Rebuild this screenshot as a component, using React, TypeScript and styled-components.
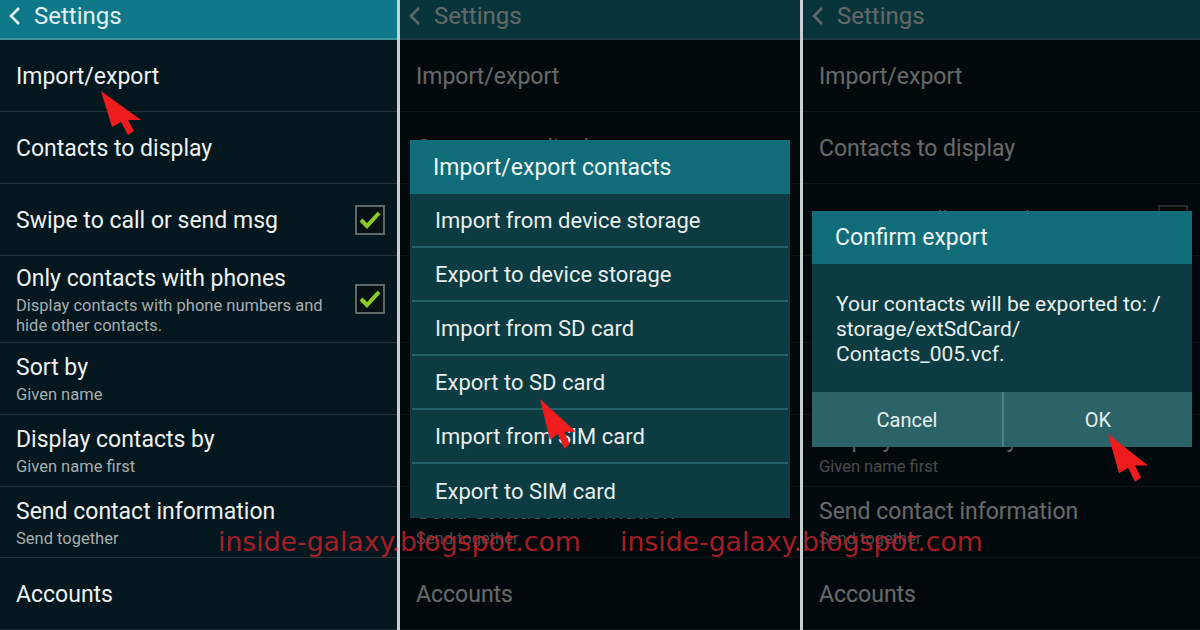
import styled, { createGlobalStyle } from "styled-components";

const GlobalStyle = createGlobalStyle`
    html, body {
        margin: 0;
        padding: 0;
        background: #000;
    }
    body {
        width: 1200px;
        height: 630px;
        overflow: hidden;
        font-family: Roboto, "Noto Sans", sans-serif;
    }
`;

const Screen = styled.div`
    position: relative;
    display: flex;
    width: 1200px;
    height: 630px;
    overflow: hidden;
`;

const Divider = styled.div`
    width: 3px;
    background: #c9cfd0;
`;

const Panel = styled.div<{ $w: number }>`
    position: relative;
    width: ${(p) => p.$w}px;
    height: 630px;
    overflow: hidden;
    background: #05171e;
`;

const Shade = styled.div`
    position: absolute;
    inset: 0;
    background: rgba(0, 0, 0, 0.57);
`;

const Header = styled.div`
    display: flex;
    align-items: center;
    gap: 12px;
    height: 40px;
    box-sizing: border-box;
    padding: 0 0 7px 8px;
    background: #0e7888;
    border-bottom: 2px solid #3e8f9b;
    color: #e3f0f1;
    font-size: 24px;
`;

const Row = styled.div<{ $h: number }>`
    display: flex;
    align-items: center;
    justify-content: space-between;
    height: ${(p) => p.$h}px;
    box-sizing: border-box;
    padding: 3px 12px 0 16px;
    border-bottom: 1px solid #1d3239;
`;

const RowText = styled.div`
    display: flex;
    flex-direction: column;
`;

const Title = styled.div`
    color: #eef1f1;
    font-size: 23px;
    line-height: 26px;
`;

const Sub = styled.div`
    color: #a6aeb0;
    font-size: 16.5px;
    line-height: 20px;
    margin-top: 4px;
    max-width: 320px;
`;

const Check = styled.div`
    width: 26px;
    height: 26px;
    margin-top: -3px;
    border: 2px solid #5d6868;
    background: #071114;
    display: flex;
    align-items: center;
    justify-content: center;
    flex-shrink: 0;
`;

const Dialog = styled.div<{ $left: number; $top: number }>`
    position: absolute;
    left: ${(p) => p.$left}px;
    top: ${(p) => p.$top}px;
    width: 380px;
    background: #0c3b41;
    box-shadow: 0 0 6px rgba(0, 0, 0, 0.5);
`;

const DialogTitle = styled.div<{ $h: number }>`
    display: flex;
    align-items: center;
    height: ${(p) => p.$h}px;
    padding-left: 23px;
    background: #0f6c78;
    color: #f1f5f5;
    font-size: 23px;
`;

const MenuItem = styled.div<{ $last?: boolean }>`
    display: flex;
    align-items: center;
    height: 54px;
    box-sizing: border-box;
    margin: 0 2px;
    padding-left: 23px;
    border-bottom: ${(p) => (p.$last ? "none" : "2px solid #24606a")};
    color: #e8eeee;
    font-size: 22px;
`;

const DialogBody = styled.div`
    height: 128px;
    box-sizing: border-box;
    padding: 28px 20px 0 24px;
    color: #e9efef;
    font-size: 21px;
    line-height: 25px;
`;

const Buttons = styled.div`
    display: grid;
    grid-template-columns: 190px 190px;
    height: 55px;
    background: #2c6368;
`;

const Button = styled.div<{ $sep?: boolean }>`
    display: flex;
    align-items: center;
    justify-content: center;
    color: #e6eeee;
    font-size: 20px;
    border-left: ${(p) => (p.$sep ? "2px solid #4d8186" : "none")};
`;

const Pointer = styled.svg<{ $x: number; $y: number }>`
    position: absolute;
    left: ${(p) => p.$x}px;
    top: ${(p) => p.$y}px;
    overflow: visible;
`;

const Watermark = styled.div<{ $x: number }>`
    position: absolute;
    left: ${(p) => p.$x}px;
    top: 526px;
    line-height: 32px;
    font-family: "DejaVu Sans", Verdana, sans-serif;
    font-size: 26.7px;
    color: rgba(196, 32, 42, 0.85);
    white-space: nowrap;
`;

function Chevron() {
    return (
        <svg width="14" height="20" viewBox="0 0 14 20">
            <polyline points="11,2 3,10 11,18" fill="none" stroke="#e3f0f1" strokeWidth="2.6" />
        </svg>
    );
}

function Tick() {
    return (
        <svg width="24" height="20" viewBox="0 0 24 20">
            <polyline points="3,10 9,16 21,3" fill="none" stroke="#8acb25" strokeWidth="4" />
        </svg>
    );
}

function Arrow({ x, y, w, h }: { x: number; y: number; w: number; h: number }) {
    return (
        <Pointer $x={x} $y={y} width={w} height={h} viewBox="0 0 40 46" preserveAspectRatio="none">
            <path d="M0 0 L11 36 L20 31 L27 44 L33 40 L27 29 L40 29 Z" fill="#ee1c1c" />
        </Pointer>
    );
}

const rows = [
    { title: "Import/export", h: 72 },
    { title: "Contacts to display", h: 72 },
    { title: "Swipe to call or send msg", h: 72, check: true },
    {
        title: "Only contacts with phones",
        sub: "Display contacts with phone numbers and hide other contacts.",
        h: 87,
        check: true,
    },
    { title: "Sort by", sub: "Given name", h: 72 },
    { title: "Display contacts by", sub: "Given name first", h: 72 },
    { title: "Send contact information", sub: "Send together", h: 71 },
    { title: "Accounts", h: 72 },
];

function SettingsList() {
    return (
        <>
            <Header>
                <Chevron />
                <span>Settings</span>
            </Header>
            {rows.map((r) => (
                <Row key={r.title} $h={r.h}>
                    <RowText>
                        <Title>{r.title}</Title>
                        {r.sub && <Sub>{r.sub}</Sub>}
                    </RowText>
                    {r.check && (
                        <Check>
                            <Tick />
                        </Check>
                    )}
                </Row>
            ))}
        </>
    );
}

const menu = [
    "Import from device storage",
    "Export to device storage",
    "Import from SD card",
    "Export to SD card",
    "Import from SIM card",
    "Export to SIM card",
];

export default function App() {
    return (
        <>
            <GlobalStyle />
            <Screen>
                <Panel $w={397}>
                    <SettingsList />
                    <Arrow x={101} y={91} w={40} h={46} />
                </Panel>
                <Divider />
                <Panel $w={400}>
                    <SettingsList />
                    <Shade />
                    <Dialog $left={10} $top={140}>
                        <DialogTitle $h={54}>Import/export contacts</DialogTitle>
                        {menu.map((m, i) => (
                            <MenuItem key={m} $last={i === menu.length - 1}>
                                {m}
                            </MenuItem>
                        ))}
                    </Dialog>
                    <Arrow x={140} y={399} w={36} h={52} />
                </Panel>
                <Divider />
                <Panel $w={397}>
                    <SettingsList />
                    <Shade />
                    <Dialog $left={9} $top={211}>
                        <DialogTitle $h={53}>Confirm export</DialogTitle>
                        <DialogBody>
                            Your contacts will be exported to: /
                            <br />
                            storage/extSdCard/
                            <br />
                            Contacts_005.vcf.
                        </DialogBody>
                        <Buttons>
                            <Button>Cancel</Button>
                            <Button $sep>OK</Button>
                        </Buttons>
                    </Dialog>
                    <Arrow x={305} y={434} w={40} h={50} />
                </Panel>
                <Watermark $x={218}>inside-galaxy.blogspot.com</Watermark>
                <Watermark $x={620}>inside-galaxy.blogspot.com</Watermark>
            </Screen>
        </>
    );
}
